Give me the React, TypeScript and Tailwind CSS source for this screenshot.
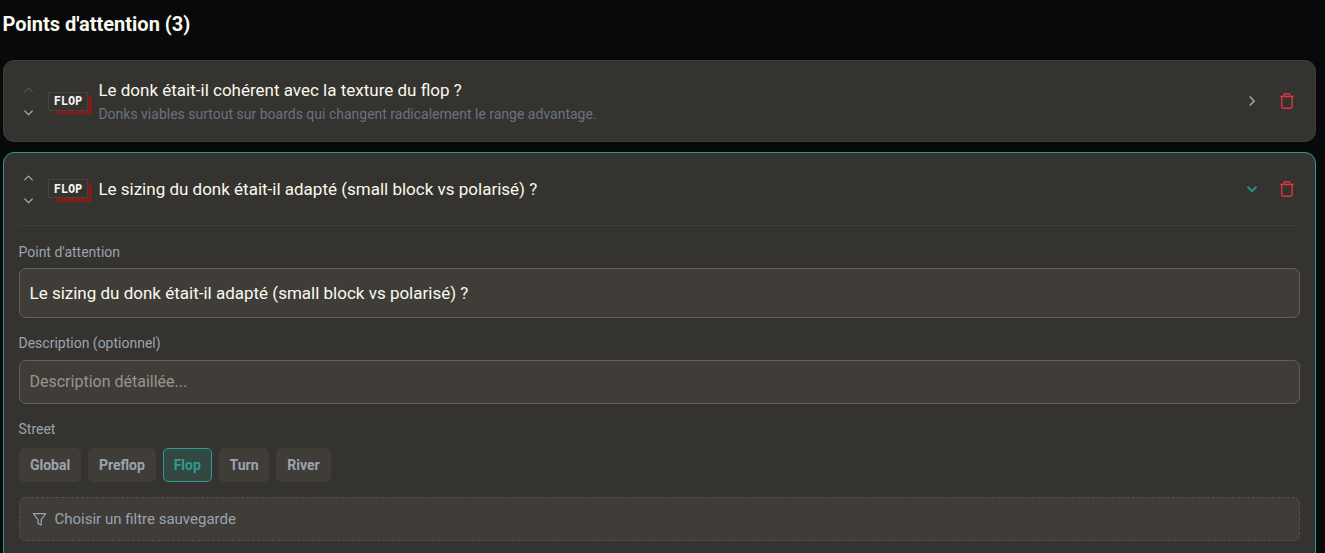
import { useState } from "react";

const STREETS = ["Global", "Preflop", "Flop", "Turn", "River"];

function Chevron({ d, className }: { d: string; className: string }) {
  return (
    <svg viewBox="0 0 12 12" fill="none" stroke="currentColor" className={className}>
      <path d={d} strokeLinecap="round" strokeLinejoin="round" />
    </svg>
  );
}

function TrashIcon() {
  return (
    <svg viewBox="0 0 18 18" fill="none" stroke="currentColor" className="w-[18px] h-[18px] text-[#dc3545]" strokeWidth="1.4" strokeLinecap="round" strokeLinejoin="round">
      <path d="M2.7 4.5H15.3" />
      <path d="M3.7 4.5V14.8Q3.7 16.2 5.1 16.2H12.7Q14.1 16.2 14.1 14.8V4.5" />
      <path d="M6 4.3V3.1Q6 1.7 7.4 1.7H10.6Q12 1.7 12 3.1V4.3" />
    </svg>
  );
}

function StreetTag({ label }: { label: string }) {
  return (
    <div className="relative w-[44px] h-[19px] shrink-0">
      <div className="absolute left-2 top-[3.5px] w-9 h-[19px] bg-[#7f1d1d]" />
      <div className="absolute left-0 top-0 w-10 h-[19px] bg-[#35332f] border border-[#45423e] flex items-center justify-center font-['DejaVu_Sans_Mono',monospace] font-bold text-[12px] leading-none tracking-[-0.1px] text-[#f5f5f5]">
        {label}
      </div>
    </div>
  );
}

function Reorder({ first }: { first?: boolean }) {
  return (
    <div className="flex flex-col gap-[11px] w-3 shrink-0">
      <Chevron d="M2.8 7.8L6.5 4.1L10.2 7.8" className={first ? "size-3 text-[#55524f] stroke-[1.3]" : "size-3 text-[#9ca3af] stroke-[1.3]"} />
      <Chevron d="M2.8 4L6.5 7.7L10.2 4" className="size-3 text-[#9ca3af] stroke-[1.3]" />
    </div>
  );
}

export default function App() {
  const [street, setStreet] = useState("Flop");
  const [title, setTitle] = useState("Le sizing du donk était-il adapté (small block vs polarisé) ?");

  return (
    <div className="h-screen overflow-hidden bg-[#08090b] pl-[3px] pr-[9px] font-[Roboto,sans-serif] text-[#faf9ed]">
      <h2 className="pt-[10px] h-[60px] -ml-[0.5px] text-[20px] leading-[28px] font-bold">Points d'attention (3)</h2>

      {/* Collapsed item */}
      <div className="flex items-center h-[82px] pl-[18px] pr-[19px] rounded-[11px] border border-[#403d39] bg-[#35332f]">
        <Reorder first />
        <div className="ml-[14px]">
          <StreetTag label="FLOP" />
        </div>
        <div className="flex-1 ml-[6.4px] pb-[2px]">
          <p className="text-[17px] leading-6">Le donk était-il cohérent avec la texture du flop ?</p>
          <p className="text-[14px] leading-[18px] mt-[3px] text-[#6b7280]">Donks viables surtout sur boards qui changent radicalement le range advantage.</p>
        </div>
        <Chevron d="M4.2 2L8.2 6L4.2 10" className="size-3 mr-5 text-[#9ca3af] stroke-[1.7]" />
        <TrashIcon />
      </div>

      {/* Expanded item */}
      <div className="mt-[10px] h-[440px] px-[15px] rounded-[11px] border border-[#2a9d8f] bg-[#35332f]">
        <div className="flex items-center h-[73px] pl-[3px] pr-1 border-b border-[#403d39]">
          <Reorder />
          <div className="ml-[14px] mb-px">
            <StreetTag label="FLOP" />
          </div>
          <p className="flex-1 ml-[6.4px] text-[17px] leading-6">{title}</p>
          <Chevron d="M2 4.2L6 8.2L10 4.2" className="size-3 mr-5 text-[#2a8f82] stroke-[2]" />
          <TrashIcon />
        </div>

        <label className="block mt-[17px] h-[25px] -ml-[0.5px] text-[14px] leading-[18px] text-[#9ca3af]">Point d'attention</label>
        <input
          value={title}
          onChange={(e) => setTitle(e.target.value)}
          className="block w-full h-[50px] px-[9.5px] rounded-[7px] border border-[#62605d] bg-[#403d39] text-[17px] outline-none"
        />

        <label className="block mt-4 h-[26px] -ml-[0.5px] text-[14px] leading-[18px] text-[#9ca3af]">Description (optionnel)</label>
        <input
          placeholder="Description détaillée..."
          className="block w-full h-[44px] px-[9.5px] pb-[2px] rounded-[7px] border border-[#62605d] bg-[#403d39] text-[16px] outline-none placeholder:text-[#99958d]"
        />

        <label className="block mt-4 h-7 -ml-[0.5px] text-[14px] leading-[18px] text-[#9ca3af]">Street</label>
        <div className="flex gap-[7px]">
          {STREETS.map((s) => (
            <button
              key={s}
              onClick={() => setStreet(s)}
              className={`h-[34px] px-[9.9px] rounded-[5px] border text-[14px] font-bold ${
                s === street
                  ? "border-[#2a9d8f] bg-[#334842] text-[#2a9d8f]"
                  : "border-[#403d39] bg-[#403d39] text-[#9ca3af]"
              }`}
            >
              {s}
            </button>
          ))}
        </div>

        <button className="flex items-center w-full h-[44px] mt-[15px] pl-3 rounded-[7px] border border-dashed border-[#55524e] bg-[#403d39] text-[15px] text-[#9ca3af]">
          <svg viewBox="0 0 16 16" fill="none" stroke="currentColor" className="size-4 mr-[6.5px]" strokeWidth="1.2" strokeLinejoin="round">
            <path d="M1.3 2.6H13.7L9.2 8.6V14L6 12.4V8.6Z" />
          </svg>
          Choisir un filtre sauvegarde
        </button>
      </div>
    </div>
  );
}
